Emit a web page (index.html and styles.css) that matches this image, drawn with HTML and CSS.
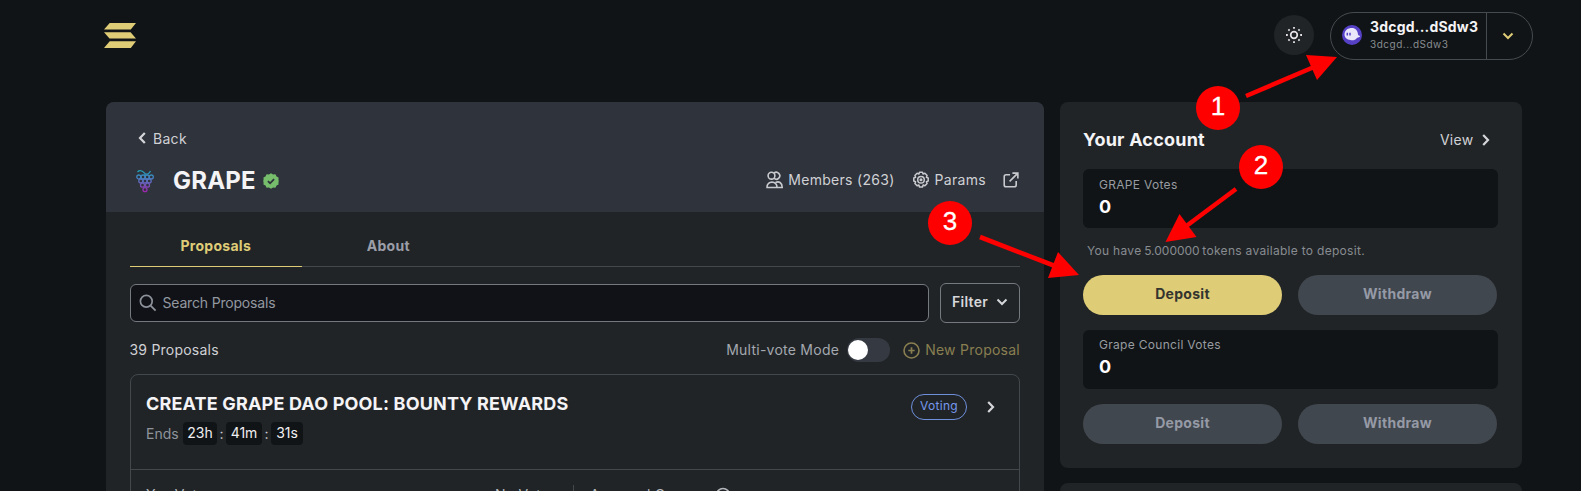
FILE: index.html
```html
<!DOCTYPE html>
<html lang="en">
<head>
<meta charset="utf-8">
<title>GRAPE DAO</title>
<link rel="stylesheet" href="styles.css">
</head>
<body>
<header class="topbar">
  <svg class="logo" viewBox="0 0 32 25"><path d="M5.700 0H32l-5.200 6.400H0zM0 9.200h26.600L32 15.400H5.500zM5.700 18.300H32L26.800 25H0z"/></svg>
  <div class="top-actions">
    <button class="theme"><svg width="18" height="18" viewBox="0 0 18 18"><circle cx="9" cy="9" r="3.300" fill="none" stroke="#e5e3e6" stroke-width="1.700"/><path d="M9 1v1.800M9 15.200V17M1 9h1.800M15.200 9H17M3.400 3.400l1.200 1.200M13.400 13.400l1.200 1.200M3.400 14.600l1.200-1.200M13.400 4.600l1.200-1.200" fill="none" stroke="#e5e3e6" stroke-width="1.800"/></svg></button>
    <div class="wallet">
      <div class="wallet-main">
        <svg width="20" height="20" viewBox="0 0 20 20"><circle cx="10" cy="10" r="10" fill="#5540c6"/><path d="M2.500 9.200C2.900 5 6 3 9.800 3c3.700 0 5.900 2.500 6.200 6.400.4 1.100 1.300 1.100 2.300 1.700-.7 1.200-2 1.700-3.200 1.600-1.600 2.300-4.400 3-6.700 2.300C5 14.500 2.500 12.600 2.500 9.200z" fill="#ebe7fb"/><path d="M5.300 7.700v2.700M8 7.700v2.700" stroke="#5540c6" stroke-width="1.500"/></svg>
        <div><div class="wallet-name">3dcgd...dSdw3</div><div class="wallet-sub">3dcgd...dSdw3</div></div>
      </div>
      <div class="wallet-more"><svg width="12" height="8" viewBox="0 0 12 8"><path d="M1.500 1.500 6 6l4.500-4.500" fill="none" stroke="#dfcc77" stroke-width="2"/></svg></div>
    </div>
  </div>
</header>
<main class="columns">
  <section class="realm">
    <div class="realm-head">
      <a class="back"><svg width="8" height="12" viewBox="0 0 8 12"><path d="M6.800 1 2 6l4.800 5" fill="none" stroke="#d5d6da" stroke-width="2.200"/></svg>Back</a>
      <div class="realm-row">
        <svg class="grapes" width="18" height="24" viewBox="0 0 18 24"><defs><linearGradient id="vine" x1="0" y1="0" x2="0" y2="24" gradientUnits="userSpaceOnUse"><stop offset="0" stop-color="#16a9b4"/><stop offset=".4" stop-color="#4a7cc0"/><stop offset=".7" stop-color="#7a4db5"/><stop offset="1" stop-color="#a61fae"/></linearGradient></defs><g fill="none" stroke="url(#vine)" stroke-width="1.300"><path d="M1.500 3c3-3 5.500-.5 7.500 1.500 2 1.500 4 .5 5.500-2.500M9 4.500v1.500"/><circle cx="2.800" cy="8" r="2"/><circle cx="7" cy="8" r="2"/><circle cx="11.200" cy="8" r="2"/><circle cx="15.300" cy="8" r="2"/><circle cx="4.800" cy="12" r="2"/><circle cx="9" cy="12" r="2"/><circle cx="13.200" cy="12" r="2"/><circle cx="6.500" cy="16.200" r="2"/><circle cx="11.500" cy="16.200" r="2"/><circle cx="9" cy="20.700" r="2"/></g></svg>
        <h1>GRAPE</h1>
        <svg class="verified" width="16" height="16" viewBox="0 0 17 17"><path d="M8.500.3 10.700 1.500l2.500-.1 1.200 2.200 2.100 1.300-.1 2.400.4 1.200-.4 1.200.1 2.400-2.100 1.300-1.200 2.200-2.500-.1-2.200 1.200-2.200-1.200-2.500.1-1.200-2.200L.5 12.100l.1-2.400L.2 8.500l.4-1.200L.5 4.900l2.100-1.300 1.200-2.200 2.500.1z" fill="#76be6c"/><path d="m5.200 8.700 2.300 2.200 4.300-4.400" fill="none" stroke="#2e333c" stroke-width="1.900"/></svg>
        <nav class="realm-links">
          <a><svg width="17" height="18" viewBox="0 0 17 18"><g fill="none" stroke="#c9cace" stroke-width="1.600"><circle cx="5.500" cy="4.700" r="3.400"/><path d="M8 2.200a3.400 3.400 0 1 1 0 5M1 16.500c0-7.200 10-7.200 10 0zM11 16.500h5.200c0-5-3.500-6.600-6.600-5"/></g></svg>Members (263)</a>
          <a class="params"><svg width="18" height="18" viewBox="0 0 18 18"><g fill="none" stroke="#c9cace" stroke-width="1.500"><path d="M7.500 1.300h3l.6 1.700 1.800-.7 2.200 2.200-.7 1.700 1.800.8v3l-1.800.8.7 1.700-2.200 2.200-1.800-.7-.6 1.900h-3l-.6-1.900-1.800.7-2.200-2.200.7-1.700-1.800-.8V7l1.800-.8-.7-1.700 2.200-2.200 1.800.7z" stroke-linejoin="round"/><circle cx="9" cy="8.700" r="3.300"/><circle cx="9" cy="8.700" r=".8"/></g></svg>Params</a>
          <a class="ext"><svg width="16" height="16" viewBox="0 0 17 17"><path d="M7.500 3H3.300Q1.300 3 1.300 5v8.700q0 2 2 2H12q2 0 2-2V9.500M10 1.200h5.800V7M15.500 1.500 7 10" fill="none" stroke="#c9cace" stroke-width="1.700"/></svg></a>
        </nav>
      </div>
    </div>
    <div class="realm-body">
      <div class="tabs"><a class="tab active">Proposals</a><a class="tab">About</a></div>
      <div class="search-row">
        <div class="search"><svg width="18" height="18" viewBox="0 0 18 18"><circle cx="7.300" cy="7.300" r="5.900" fill="none" stroke="#8d929a" stroke-width="1.700"/><path d="m11.600 11.600 5 5" stroke="#8d929a" stroke-width="1.900"/></svg>Search Proposals</div>
        <button class="filter">Filter<svg width="12" height="8" viewBox="0 0 12 8"><path d="M1.500 1.500 6 6l4.500-4.500" fill="none" stroke="#d5d6da" stroke-width="2"/></svg></button>
      </div>
      <div class="list-bar">
        <span class="count">39 Proposals</span>
        <span class="multi">Multi-vote Mode</span>
        <span class="toggle"><i></i></span>
        <a class="new"><svg width="17" height="17" viewBox="0 0 17 17"><circle cx="8.500" cy="8.500" r="7.500" fill="none" stroke="#897f51" stroke-width="1.600"/><path d="M8.500 5.300v6.400M5.300 8.500h6.400" stroke="#897f51" stroke-width="1.700"/></svg>New Proposal</a>
      </div>
      <article class="proposal">
        <div class="proposal-top">
          <div class="proposal-info">
            <h3>CREATE GRAPE DAO POOL: BOUNTY REWARDS</h3>
            <div class="ends"><span class="ends-label">Ends</span><b class="h">23h</b><em>:</em><b class="m">41m</b><em>:</em><b class="s">31s</b></div>
          </div>
          <span class="status">Voting</span>
          <svg class="go" width="8" height="12" viewBox="0 0 8 12"><path d="M1.200 1 6 6l-4.800 5" fill="none" stroke="#d5d6da" stroke-width="2.200"/></svg>
        </div>
        <div class="votes"><span class="yes">Yes Votes</span><span class="no">No Votes</span><span class="quorum">Approval Quorum<svg width="16" height="16" viewBox="0 0 16 16"><circle cx="8" cy="8" r="6.500" fill="none" stroke="#b4b7bc" stroke-width="1.500"/></svg></span></div>
      </article>
    </div>
  </section>
  <aside class="side">
    <section class="account">
      <div class="account-head"><h2>Your Account</h2><a>View<svg width="8" height="12" viewBox="0 0 8 12"><path d="M1.200 1 6 6l-4.800 5" fill="none" stroke="#d5d6da" stroke-width="2.200"/></svg></a></div>
      <div class="balance"><span>GRAPE Votes</span><strong>0</strong></div>
      <p class="note">You have <span>5.000000</span> tokens available to deposit.</p>
      <div class="buttons"><button class="primary">Deposit</button><button>Withdraw</button></div>
      <div class="balance council"><span>Grape Council Votes</span><strong>0</strong></div>
      <div class="buttons last"><button>Deposit</button><button>Withdraw</button></div>
    </section>
    <section class="next-card"></section>
  </aside>
</main>
<div class="annotations">
  <svg width="1581" height="491" viewBox="0 0 1581 491"><g stroke="red" stroke-width="4.600"><path d="m1246 96 68-29M1236 189l-51 38M980 237l75 29"/></g><path d="m1306 55 31 2-20 23zM1179.500 214l17 23-31 5zM1058 252l21 23-31 3z" fill="red"/></svg>
  <span class="step one">1</span><span class="step two">2</span><span class="step three">3</span>
</div>
</body>
</html>
```
FILE: styles.css
```css
* { box-sizing: border-box; }
body { margin: 0; width: 1581px; height: 491px; overflow: hidden; position: relative; background: #101416; color: #d0d1d5; font: 14px/20px Inter, sans-serif; letter-spacing: .3px; }
svg { display: block; flex: none; }
h1, h2, h3, p { margin: 0; color: #f4f3f5; }
button { font: inherit; letter-spacing: inherit; border: 0; padding: 0; display: flex; align-items: center; justify-content: center; }
.topbar { height: 102px; padding: 12px 48px 0 104px; display: flex; justify-content: space-between; align-items: flex-start; }
.logo { width: 32px; height: 25px; margin-top: 11px; fill: #dfcc77; }
.top-actions { display: flex; align-items: flex-start; gap: 16px; }
.theme { width: 40px; height: 40px; margin-top: 3px; border-radius: 50%; background: #202427; }
.wallet { display: flex; width: 203px; height: 48px; border: 1px solid #464b50; border-radius: 24px; }
.wallet-main { width: 156px; padding: 0 0 2px 11px; display: flex; align-items: center; gap: 8px; border-right: 1px solid #464b50; }
.wallet-name { font-weight: 700; font-size: 14px; line-height: 18px; letter-spacing: .2px; color: #f4f3f5; }
.wallet-sub { font-size: 10px; line-height: 16px; letter-spacing: .5px; color: #888c91; }
.wallet-more { flex: 1; display: grid; place-items: center; padding-right: 3px; }
.columns { display: flex; align-items: flex-start; gap: 15px; padding-left: 105.5px; }
.realm { width: 938.5px; height: 389px; border-radius: 8px 8px 0 0; background: #202427; overflow: hidden; }
.realm-head { height: 110px; padding: 26px 25px 0 31.5px; background: #2f333c; }
.back { display: flex; align-items: center; gap: 8px; height: 20px; line-height: 19px; }
.back svg { position: relative; left: .5px; }
.realm-row { display: flex; align-items: center; height: 32px; margin-top: 17px; }
.grapes { margin-left: -1px; }
h1 { font-size: 24px; line-height: 32px; margin-left: 19px; width: 90px; letter-spacing: .2px; }
.realm-links { margin-left: auto; display: flex; align-items: center; height: 30px; margin-bottom: 2px; }
.realm-links a { display: flex; align-items: center; gap: 5px; }
.realm-links .params { margin-left: 17px; }
.realm-links .ext { margin-left: 17px; }
.realm-body { padding: 14px 24px 0 24px; }
.tabs { display: flex; height: 41px; border-bottom: 1px solid #43484d; }
.tab { width: 172.500px; height: 41px; text-align: center; padding-top: 10px; font-weight: 700; color: #9b9ea7; }
.tab.active { color: #dfcc77; border-bottom: 1px solid #dfcc77; }
.search-row { display: flex; align-items: center; justify-content: space-between; margin-top: 16px; }
.search { width: 799px; height: 38px; padding: 0 0 1px 8px; border: 1px solid #757a80; border-radius: 6px; background: #101217; display: flex; align-items: center; gap: 6px; color: #9398a0; letter-spacing: -.18px; }
.filter { width: 80px; height: 40px; gap: 8px; padding-bottom: 2px; border: 1px solid #757a80; border-radius: 6px; background: #202427; color: #d7d7db; font-weight: 600; }
.list-bar { display: flex; align-items: center; height: 24px; margin-top: 15px; line-height: 18px; }
.multi { margin-left: auto; color: #a4a8af; margin-right: 8px; }
.count { color: #d0d1d5; letter-spacing: .22px; }
.multi, .new { letter-spacing: .25px; }
.toggle { width: 43px; height: 24px; border-radius: 12px; padding: 2px 1px; background: #353a42; }
.toggle i { display: block; width: 20px; height: 20px; border-radius: 50%; background: #fff; }
.new { display: flex; align-items: center; gap: 5px; margin-left: 13px; color: #897f51; }
.proposal { border: 1px solid #43484d; border-radius: 8px 8px 0 0; height: 130px; margin-top: 12px; }
.proposal-top { display: flex; height: 95px; padding: 18px 24px 0 15.500px; border-bottom: 1px solid #43484d; }
.proposal-info { margin-right: auto; }
h3 { font-size: 18px; line-height: 22px; letter-spacing: .17px; white-space: nowrap; }
.ends { display: flex; align-items: center; margin-top: 7px; height: 23px; font-size: 14px; letter-spacing: 0; }
.ends-label { width: 37px; color: #8f949c; }
.ends b { font-weight: 400; height: 23px; line-height: 22px; text-align: center; border-radius: 4px; background: #101416; color: #f0eff1; }
.ends em { width: 9px; text-align: center; font-style: normal; }
.h { width: 34px; } .m { width: 36px; } .s { width: 32px; }
.status { width: 56px; height: 26px; margin-top: 1px; border: 1px solid #6e8fda; border-radius: 13px; color: #7698ee; font-size: 12px; line-height: 22px; text-align: center; }
.go { margin: 8px 0 0 20px; }
.votes { display: flex; padding: 15px 0 0 15.500px; color: #b4b7bc; white-space: nowrap; letter-spacing: .2px; }
.yes { width: 349px; }
.no { width: 78px; }
.quorum { display: flex; align-items: center; gap: 6px; border-left: 1px solid #43484d; padding-left: 16px; }
.side { width: 462px; margin-left: .5px; }
.account { height: 366px; padding: 24px 24px 0 23.500px; border-radius: 8px; background: #202427; }
.account-head { display: flex; align-items: center; justify-content: space-between; height: 27px; padding-right: 8px; }
h2 { font-size: 18px; line-height: 26px; letter-spacing: .22px; }
.account-head a { display: flex; align-items: center; gap: 8px; line-height: 18px; height: 20px; }
.balance { height: 59px; margin-top: 16px; padding: 6px 16px; border-radius: 6px; background: #101416; display: flex; flex-direction: column; font-size: 12px; color: #989ba0; }
.balance strong { color: #fff; font-size: 18px; line-height: 24px; }
.council { margin-top: 15px; padding-top: 5px; }
.note { margin: 13px 0 14px 4px; font-size: 12px; color: #888c91; }
.note span { letter-spacing: 0; margin: 0 -1px; }
.buttons { display: flex; gap: 16px; }
.buttons button { width: 199px; height: 40px; border-radius: 20px; padding-bottom: 2px; background: #41474e; color: #959aa6; font-weight: 700; }
.buttons .primary { background: #dfcc77; color: #34352f; }
.last { margin-top: 15px; }
.next-card { height: 20px; margin-top: 15px; border-radius: 8px 8px 0 0; background: #202427; }
.annotations { position: absolute; inset: 0; }
.step { position: absolute; width: 44px; height: 44px; border-radius: 50%; background: red; color: #fff; font: 26px/40px "Liberation Sans", Arial, sans-serif; letter-spacing: 0; text-align: center; -webkit-text-stroke: .3px #fff; }
.one { left: 1196px; top: 86px; }
.two { left: 1239px; top: 145px; }
.three { left: 928px; top: 201px; }
```
